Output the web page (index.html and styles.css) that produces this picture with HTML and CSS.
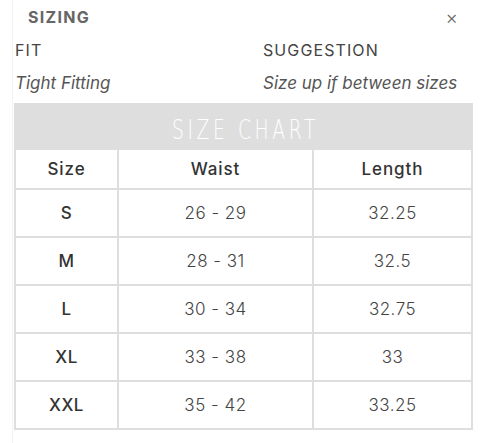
FILE: index.html
```html
<!DOCTYPE html>
<html>
<head>
<meta charset="utf-8">
<link rel="stylesheet" href="styles.css">
</head>
<body>
<div class="panel">
  <div class="topbar">
    <span class="title">SIZING</span>
    <span class="close">×</span>
  </div>
  <div class="fit">
    <div class="fit-col">
      <div class="label">FIT</div>
      <div class="value">Tight Fitting</div>
    </div>
    <div class="fit-col wide">
      <div class="label">SUGGESTION</div>
      <div class="value">Size up if between sizes</div>
    </div>
  </div>
  <div class="chart">
    <div class="chart-title"><span class="chart-text">SIZE CHART</span></div>
    <table class="grid">
      <colgroup>
        <col class="c1"><col class="c2"><col class="c3">
      </colgroup>
      <thead>
        <tr><th>Size</th><th>Waist</th><th>Length</th></tr>
      </thead>
      <tbody>
        <tr><td class="sz">S</td><td>26 - 29</td><td>32.25</td></tr>
        <tr><td class="sz">M</td><td>28 - 31</td><td>32.5</td></tr>
        <tr><td class="sz">L</td><td>30 - 34</td><td>32.75</td></tr>
        <tr><td class="sz">XL</td><td>33 - 38</td><td>33</td></tr>
        <tr><td class="sz">XXL</td><td>35 - 42</td><td>33.25</td></tr>
      </tbody>
    </table>
  </div>
</div>
</body>
</html>
```

FILE: styles.css
```css
html, body {
  margin: 0;
  padding: 0;
  background: #fff;
}
body {
  font-family: Inter, "Open Sans", "Liberation Sans", sans-serif;
  color: #444;
}
.panel {
  margin-left: 12px;
  border-left: 1px solid #f3f3f3;
  min-height: 443px;
  box-sizing: border-box;
  padding-left: 1px;
  width: 462px;
}
.topbar {
  display: flex;
  justify-content: space-between;
  align-items: center;
  height: 34px;
  padding: 0 16px 0 14px;
}
.title {
  font-weight: 700;
  font-size: 16px;
  letter-spacing: 1.3px;
  color: #666;
}
.close {
  font-size: 19px;
  font-weight: 300;
  color: #666;
}
.fit {
  display: flex;
  padding-left: 1px;
}
.fit-col {
  flex: 0 0 248px;
}
.fit-col.wide {
  flex: 1 1 auto;
}
.label {
  font-size: 16px;
  line-height: 32px;
  letter-spacing: 1.1px;
  color: #444;
}
.value {
  font-size: 17px;
  font-style: italic;
  line-height: 34px;
  letter-spacing: 0;
  color: #555;
}
.chart {
  margin-top: 3px;
  background: #dedede;
  width: 459px;
}
.chart-title {
  height: 45px;
  line-height: 54px;
  text-align: center;
  color: #fff;
  overflow: hidden;
}
.chart-text {
  display: inline-block;
  font-family: "DejaVu Sans", sans-serif;
  font-weight: 200;
  font-size: 26px;
  letter-spacing: 5px;
  transform: scaleX(0.72);
  padding-left: 5px;
}
.grid {
  border-collapse: separate;
  border-spacing: 2px;
  table-layout: fixed;
  width: 459px;
}
.c1 { width: 101px; }
.c2 { width: 193px; }
.c3 { width: 157px; }
.grid th, .grid td {
  background: #fff;
  text-align: center;
  padding: 0;
  font-size: 17px;
  letter-spacing: 0.5px;
}
.grid th {
  height: 38px;
  font-weight: 500;
  letter-spacing: 0.9px;
  color: #333;
}
.grid td {
  height: 46px;
  font-weight: 300;
  color: #444;
}
.grid td.sz {
  font-weight: 500;
  color: #333;
}
```
